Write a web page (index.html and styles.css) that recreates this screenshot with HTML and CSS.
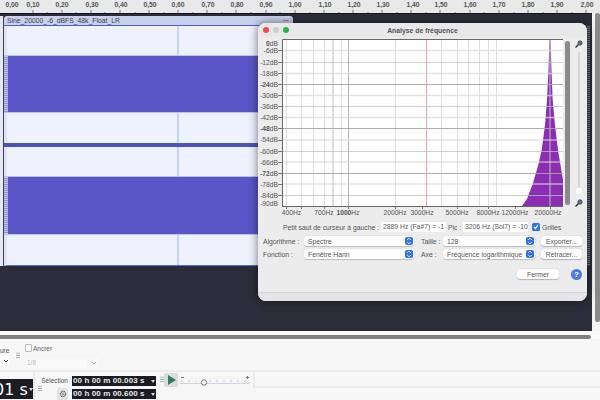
FILE: index.html
```html
<!DOCTYPE html>
<html lang="fr">
<head>
<meta charset="utf-8">
<title>Analyse de fréquence</title>
<link rel="stylesheet" href="styles.css">
</head>
<body>
<div class="app">
  <div class="ruler">
    <svg class="ruler-svg" width="600" height="13" viewBox="0 0 600 13">
      <path class="ruler-ticks" d="M33 10v3M62 10v3M91 10v3M120 10v3M149 10v3M178 10v3M207 10v3M236 10v3M266 10v3M295 10v3M324 10v3M353 10v3M382 10v3M411 10v3M440 10v3M470 10v3M499 10v3M528 10v3M557 10v3M586 10v3M47 12v1M76 12v1M105 12v1M135 12v1M164 12v1M193 12v1M222 12v1M251 12v1M280 12v1M310 12v1M339 12v1M368 12v1M397 12v1M426 12v1M455 12v1M484 12v1M514 12v1M543 12v1M572 12v1"/>
      <g class="ruler-labels">
        <text x="12" y="6.500">0,00</text><text x="33" y="6.500">0,10</text><text x="62" y="6.500">0,20</text><text x="92" y="6.500">0,30</text><text x="121" y="6.500">0,40</text><text x="150" y="6.500">0,50</text><text x="178" y="6.500">0,60</text><text x="208" y="6.500">0,70</text><text x="237" y="6.500">0,80</text><text x="266" y="6.500">0,90</text><text x="295" y="6.500">1,00</text><text x="325" y="6.500">1,10</text><text x="354" y="6.500">1,20</text><text x="383" y="6.500">1,30</text><text x="413" y="6.500">1,40</text><text x="441" y="6.500">1,50</text><text x="470" y="6.500">1,60</text><text x="499" y="6.500">1,70</text><text x="528" y="6.500">1,80</text><text x="557" y="6.500">1,90</text><text x="587" y="6.500">2,00</text>
      </g>
    </svg>
  </div>

  <div class="workspace">
    <div class="tracks">
      <div class="scale"></div>
      <div class="track">
        <div class="track-head"><span class="track-name">Sine_20000_-6_dBFS_48k_Float_LR</span><span class="track-menu">•••</span></div>
        <div class="channel">
          <div class="lane lane-a"></div>
          <div class="wave"></div>
          <div class="lane lane-b"></div>
        </div>
        <div class="channel-gap"></div>
        <div class="channel channel-low">
          <div class="lane lane-a"></div>
          <div class="wave"></div>
          <div class="lane lane-b"></div>
        </div>
      </div>
      <div class="edge-strip"></div>
    </div>
    <div class="vscroll"><div class="vscroll-thumb"></div></div>
  </div>

  <div class="hscroll"><div class="hscroll-thumb"></div></div>

  <div class="panel">
    <div class="panel-top">
      <div class="snap-left">
        <span class="small-label">ure</span>
        <span class="mini-select"><svg width="6" height="4" viewBox="0 0 6 4"><path class="chev-dark" d="M1 1l2 2 2-2"/></svg></span>
      </div>
      <div class="grip grip-top"></div>
      <div class="snap">
        <label class="anchor"><span class="anchor-box"></span>Ancrer</label>
        <div class="snap-row">
          <span class="snap-select">1/8</span>
          <span class="snap-btn"><svg width="6" height="4" viewBox="0 0 6 4"><path class="chev-light" d="M1 1l2 2 2-2"/></svg></span>
        </div>
      </div>
    </div>
    <div class="panel-bottom">
      <div class="time-wrap">
        <div class="time-big"><span class="time-text">01 s</span><span class="time-caret"></span></div>
      </div>
      <div class="grip grip-sel"></div>
      <div class="sel-labels">
        <span class="small-label">Sélection</span>
        <span class="gear-btn">
          <svg width="8" height="8" viewBox="0 0 8 8"><circle class="gear" cx="4" cy="4" r="2.600"/><circle class="gear-hole" cx="4" cy="4" r="1"/></svg>
        </span>
      </div>
      <div class="sel-times">
        <div class="time-box">00 h 00 m 00.003 s<span class="box-caret"></span></div>
        <div class="time-box">00 h 00 m 00.600 s<span class="box-caret"></span></div>
      </div>
      <div class="grip grip-play"></div>
      <span class="play-btn"><svg width="9" height="10" viewBox="0 0 9 10"><path class="play" d="M1 0l8 5-8 5z"/></svg></span>
      <svg class="speed" width="72" height="14" viewBox="0 0 72 14">
        <path class="speed-sign" d="M1 4.500h3M66 4.500h3M67.500 3v3"/>
        <path class="speed-track" d="M0 10.500h70"/>
        <path class="speed-ticks" d="M2 7v2M9 7v2M16 7v2M30 7v2M37 7v2M44 7v2M51 7v2M58 7v2M65 7v2"/>
        <circle class="speed-knob" cx="24" cy="9.500" r="2.700"/>
      </svg>
      <div class="panel-end"></div>
    </div>
  </div>

  <div class="dialog">
    <div class="titlebar">
      <span class="light light-red"></span><span class="light light-grey"></span><span class="light light-green"></span>
      <span class="title">Analyse de fréquence</span>
    </div>
    <svg class="graph" width="329" height="180" viewBox="258 37 329 180">
      <rect class="plot-bg" x="282" y="39" width="281" height="167"/>
      <path class="spectrum" d="M522 206L527 199L533 183L538 166L541.700 150L545 125L547 100L548.500 70L549.500 40L550.500 40L551.500 70L552.700 100L555 125L558 150L561 168L563 180L563 206Z"/>
      <path class="grid-soft" d="M286.500 39V206M301.500 39V206M313.500 39V206M324.500 39V206M341.500 39V206M395.500 39V206M441.500 39V206M457.500 39V206M468.500 39V206M479.500 39V206M488.500 39V206M496.500 39V206"/>
      <path class="grid-mid" d="M333 39V206M550 39V206"/>
      <path class="grid-hard" d="M348.500 39V206"/>
      <path class="grid-h-soft" d="M282 50.500H563M282 73.500H563M282 95.500H563M282 117.500H563M282 140H563M282 162H563M282 184H563"/>
      <path class="grid-h-mid" d="M282 62.500H563M282 106.500H563M282 151.500H563M282 195.500H563"/>
      <path class="grid-h-hard" d="M282 84.500H563M282 128.500H563M282 173.500H563"/>
      <path class="cursor" d="M426.500 39V206"/>
      <path class="plot-frame" d="M282.500 206V39.500H563M282 206.500H563"/>
      <path class="ticks" d="M278 50.500h4M278 62.500h4M278 73.500h4M278 84.500h4M278 95.500h4M278 106.500h4M278 117.500h4M278 128.500h4M278 140.500h4M278 151.500h4M278 162.500h4M278 173.500h4M278 184.500h4M278 195.500h4M286.500 206v3M301.500 206v3M324.500 206v3M348.500 206v3M395.500 206v3M422.500 206v3M457.500 206v3M488.500 206v3M515.500 206v3M550.500 206v3"/>
      <g class="db-labels">
        <text x="278" y="46"><tspan class="strong">0</tspan>dB</text>
        <text x="278" y="53">-6dB</text>
        <text x="278" y="64.500">-12dB</text>
        <text x="278" y="76">-18dB</text>
        <text x="278" y="86.500"><tspan class="strong">-24</tspan>dB</text>
        <text x="278" y="98">-30dB</text>
        <text x="278" y="109">-36dB</text>
        <text x="278" y="120">-42dB</text>
        <text x="278" y="131"><tspan class="strong">-48</tspan>dB</text>
        <text x="278" y="142">-54dB</text>
        <text x="278" y="153.500">-60dB</text>
        <text x="278" y="164.500">-66dB</text>
        <text x="278" y="175.500"><tspan class="strong">-72</tspan>dB</text>
        <text x="278" y="186.500">-78dB</text>
        <text x="278" y="197.500">-84dB</text>
        <text x="278" y="205.500">-90dB</text>
      </g>
      <g class="hz-labels">
        <text x="291.500" y="214.500">400Hz</text>
        <text x="324" y="214.500">700Hz</text>
        <text x="348" y="214.500"><tspan class="strong">1000</tspan>Hz</text>
        <text x="395" y="214.500">2000Hz</text>
        <text x="422" y="214.500">3000Hz</text>
        <text x="457" y="214.500">5000Hz</text>
        <text x="488" y="214.500">8000Hz</text>
        <text x="515" y="214.500">12000Hz</text>
        <text x="548" y="214.500">20000Hz</text>
      </g>
      <rect class="vbar" x="565" y="41" width="5" height="164" rx="2.500"/>
      <rect class="zoom-track" x="578" y="52" width="2" height="136" rx="1"/>
      <circle class="zoom-knob" cx="579" cy="191" r="4"/>
      <g class="magnifier"><circle cx="580" cy="43" r="2.200"/><path d="M578.300 44.800L575.500 47.500"/></g>
      <g class="magnifier"><circle cx="580" cy="202" r="2.200"/><path d="M578.300 203.800L575.500 206.500"/></g>
    </svg>

    <div class="controls">
      <div class="row row-cursor">
        <span class="cursor-label">Petit saut de curseur à gauche :</span>
        <span class="readout readout-a">2889 Hz (Fa#7) = -1</span>
        <span class="pic-label">Pic :</span>
        <span class="readout readout-b">3206 Hz (Sol7) = -10</span>
        <span class="check"><svg width="6" height="6" viewBox="0 0 6 6"><path class="check-mark" d="M1 3l1.500 1.500L5 1"/></svg></span>
        <span>Grilles</span>
      </div>
      <div class="row row-form">
        <span class="field-label">Algorithme :</span>
        <span class="select select-wide">Spectre<span class="stepper"><svg width="6" height="8" viewBox="0 0 6 8"><path class="step-mark" d="M1.200 3L3 1.200 4.800 3M1.200 5L3 6.800 4.800 5"/></svg></span></span>
        <span class="field-label-b">Taille :</span>
        <span class="select select-narrow">128<span class="stepper"><svg width="6" height="8" viewBox="0 0 6 8"><path class="step-mark" d="M1.200 3L3 1.200 4.800 3M1.200 5L3 6.800 4.800 5"/></svg></span></span>
        <span class="button button-side">Exporter...</span>
      </div>
      <div class="row row-form">
        <span class="field-label">Fonction :</span>
        <span class="select select-wide">Fenêtre Hann<span class="stepper"><svg width="6" height="8" viewBox="0 0 6 8"><path class="step-mark" d="M1.200 3L3 1.200 4.800 3M1.200 5L3 6.800 4.800 5"/></svg></span></span>
        <span class="field-label-b">Axe :</span>
        <span class="select select-narrow">Fréquence logarithmique<span class="stepper"><svg width="6" height="8" viewBox="0 0 6 8"><path class="step-mark" d="M1.200 3L3 1.200 4.800 3M1.200 5L3 6.800 4.800 5"/></svg></span></span>
        <span class="button button-side">Retracer...</span>
      </div>
      <div class="row row-close">
        <span class="button button-close">Fermer</span>
        <span class="help">?</span>
      </div>
    </div>
    <div class="dialog-foot"></div>
  </div>
</div>
</body>
</html>
```

FILE: styles.css
```css
* { box-sizing: border-box; }
html, body { margin: 0; padding: 0; }
body {
  width: 600px;
  height: 400px;
  overflow: hidden;
  background: #f6f6f6;
  font-family: "Liberation Sans", Arial, sans-serif;
  font-size: 6.800px;
  color: #4a4a4a;
}
.app { position: relative; width: 600px; height: 400px; overflow: hidden; }

/* Ruler */
.ruler { height: 13px; background: #e9e9e9; }
.ruler-svg { display: block; }
.ruler-ticks { stroke: #777; stroke-width: 1; fill: none; }
.ruler-labels text { font-size: 6.800px; font-weight: 700; fill: #555; text-anchor: middle; }

/* Workspace */
.workspace { display: flex; height: 318px; background: #f4f4f4; }
.tracks {
  display: flex;
  align-items: flex-start;
  width: 592px;
  background: #2b2d3a;
  padding: 2px 2px 0 0;
  border-top: 1px solid #15161d;
}
.scale {
  width: 4px;
  height: 250px;
  background: #e6e8f2;
  border-right: 1px solid #3a3e5a;
}
.track { width: 289px; }
.track-head {
  height: 10px;
  display: flex;
  justify-content: space-between;
  align-items: center;
  padding: 0 4px 0 3px;
  background: #c9d1ee;
  border-radius: 3px 3px 0 0;
  border-bottom: 1px solid #4f5fd0;
  color: #3c3c48;
}
.track-name { font-size: 6.750px; letter-spacing: 0.020px; white-space: nowrap; }
.track-menu { font-size: 4px; letter-spacing: 0.500px; color: #444; }
.channel { display: flex; flex-direction: column; }
.lane {
  height: 29px;
  background: linear-gradient(#c6d4f8, #c6d4f8) 170px 0 / 2px 100% no-repeat, #eef2fe;
  border-left: 3px solid #dfe3f2;
}
.lane-b { height: 30px; }
.wave {
  height: 58px;
  background: repeating-linear-gradient(#c6c9ea 0 1px, #8d8fd8 1px 2px) 0 0 / 4px 100% no-repeat, #5a56c8;
  border-top: 1px solid #b9c5ee;
  border-bottom: 1px solid #b9c5ee;
}
.channel-gap { height: 4px; background: #4a52c0; }
.channel-low .wave { height: 59px; }
.channel-low .lane-b { border-bottom: 1px solid #5b6ad6; height: 31px; }
.edge-strip {
  width: 3px;
  height: 240px;
  margin: 10px 0 0 auto;
  background: repeating-linear-gradient(#7a7d88 0 1px, #3a3c48 1px 2px);
}

.vscroll { width: 8px; padding: 0 0 0 3px; }
.vscroll-thumb { width: 5px; height: 309px; background: #8a8a8a; border-radius: 2px; }

.hscroll { height: 8px; background: #fbfbfb; padding: 4px 0 0; }
.hscroll-thumb { width: 591px; height: 4px; background: #808080; border-radius: 0 2px 2px 0; }

/* Bottom panel */
.panel { display: flex; flex-direction: column; height: 61px; background: #f6f6f6; }
.panel-top {
  display: flex;
  height: 34px;
  border-bottom: 2px solid #ececec;
}
.small-label { font-size: 6.500px; color: #555; }
.snap-left { display: flex; flex-direction: column; width: 16px; padding-top: 8px; gap: 2px; }
.mini-select {
  display: flex;
  align-items: center;
  justify-content: flex-end;
  width: 9px;
  height: 9px;
  background: #fff;
  border-radius: 0 2px 2px 0;
}
.chev-dark { stroke: #333; fill: none; stroke-width: 1; }
.chev-light { stroke: #aaa; fill: none; stroke-width: 1; }
.grip {
  width: 4px;
  height: 7px;
  background: radial-gradient(circle, #9a9a9a 0.700px, transparent 0.900px) 0 0 / 2px 2.300px;
}
.grip-top { margin: 13px 5px 0 0; }
.snap { display: flex; flex-direction: column; gap: 6px; padding-top: 5px; }
.anchor { display: flex; align-items: center; gap: 1px; font-size: 6.500px; color: #666; }
.anchor-box { width: 7px; height: 8px; background: #fff; border: 1px solid #bbb; border-radius: 1px; }
.snap-row { display: flex; gap: 2px; }
.snap-select {
  width: 62px;
  height: 10px;
  padding-left: 2px;
  line-height: 10px;
  background: #fafafa;
  border-radius: 2px;
  font-size: 6.500px;
  color: #bbb;
}
.snap-btn {
  display: flex;
  align-items: center;
  justify-content: center;
  width: 10px;
  height: 10px;
  background: #fafafa;
  border-radius: 2px;
}
.panel-bottom { display: flex; flex: 1; }
.time-wrap { width: 35px; padding-top: 7px; border-right: 2px solid #e8e8e8; }
.time-big {
  display: flex;
  align-items: center;
  width: 33px;
  height: 20px;
  background: #1b1c24;
  color: #fff;
  font-family: "DejaVu Sans", sans-serif;
  font-size: 16px;
  white-space: nowrap;
  overflow: hidden;
}
.time-text { margin-left: -6px; }
.time-caret {
  flex: none;
  width: 0;
  height: 0;
  margin-left: 1px;
  border: 2px solid transparent;
  border-top: 3px solid #ddd;
  border-bottom: 0;
}
.grip-sel { margin: 13px 2px 0 3px; }
.sel-labels {
  display: flex;
  flex-direction: column;
  align-items: flex-end;
  width: 24px;
  margin-right: 4px;
  padding-top: 5px;
  gap: 4px;
}
.gear-btn {
  display: flex;
  align-items: center;
  justify-content: center;
  width: 11px;
  height: 12px;
  background: #e2e2e2;
  border-radius: 2px;
}
.gear { fill: none; stroke: #555; stroke-width: 1.200; stroke-dasharray: 1 0.600; }
.gear-hole { fill: none; stroke: #666; stroke-width: 0.600; }
.sel-times { display: flex; flex-direction: column; gap: 3px; padding-top: 4px; margin-right: 4px; }
.time-box {
  position: relative;
  display: flex;
  width: 84px;
  height: 10px;
  padding-left: 1px;
  line-height: 10px;
  background: #1b1c24;
  color: #e8e8e8;
  font-size: 8px;
  font-weight: 700;
  letter-spacing: 0.100px;
  white-space: nowrap;
  overflow: hidden;
}
.box-caret {
  position: absolute;
  right: 1px;
  top: 4px;
  width: 0;
  height: 0;
  border: 2px solid transparent;
  border-top: 3px solid #ddd;
  border-bottom: 0;
}
.grip-play { margin: 4px 0 0 0; }
.play-btn {
  display: flex;
  align-items: center;
  justify-content: center;
  width: 14px;
  height: 14px;
  margin: 1px 2px 0 0;
  background: #dcdcdc;
  border-radius: 2px;
}
.play { fill: #2e7d60; }
.speed { margin: 1px 0 0 0; }
.speed-sign { stroke: #777; stroke-width: 1; fill: none; }
.speed-track { stroke: #c9d6ea; stroke-width: 1; fill: none; }
.speed-ticks { stroke: #ccc; stroke-width: 1; fill: none; }
.speed-knob { fill: #f6f6f6; stroke: #777; stroke-width: 1; }
.panel-end {
  flex: 1;
  height: 16px;
  margin-left: 1px;
  border-left: 2px solid #ececec;
  border-bottom: 2px solid #ececec;
}

/* Dialog */
.dialog {
  position: absolute;
  left: 258px;
  top: 23px;
  width: 329px;
  height: 278px;
  display: flex;
  flex-direction: column;
  background: #ececec;
  border-radius: 8px;
  box-shadow: 0 0 8px 1px rgba(0, 0, 0, .45);
  overflow: hidden;
}
.titlebar {
  position: relative;
  display: flex;
  align-items: center;
  gap: 4px;
  height: 14px;
  flex: none;
  padding-left: 5px;
  background: #e8e8e8;
}
.light { width: 6px; height: 6px; border-radius: 50%; }
.light-red { background: #f0484c; }
.light-grey { background: #cdcdcd; }
.light-green { background: #22b83a; }
.title {
  position: absolute;
  left: 0;
  right: 0;
  text-align: center;
  font-size: 6.850px;
  font-weight: 700;
  color: #555;
}
.graph { display: block; flex: none; }
.plot-bg { fill: #fff; }
.spectrum { fill: #8b2eb3; }
.grid-soft { stroke: rgba(205, 205, 205, .65); stroke-width: 1; fill: none; }
.grid-mid { stroke: rgba(190, 190, 190, .75); stroke-width: 1.400; fill: none; }
.grid-hard { stroke: #b5b5b5; stroke-width: 1; fill: none; }
.grid-h-soft { stroke: rgba(215, 215, 215, .7); stroke-width: 1.600; fill: none; }
.grid-h-mid { stroke: rgba(190, 190, 190, .75); stroke-width: 1; fill: none; }
.grid-h-hard { stroke: rgba(165, 165, 165, .9); stroke-width: 1; fill: none; }
.cursor { stroke: #f5a0a4; stroke-width: 1; fill: none; }
.plot-frame { stroke: #666; stroke-width: 1; fill: none; }
.ticks { stroke: #777; stroke-width: 1; fill: none; }
.db-labels text { font-size: 6.700px; fill: #555; text-anchor: end; }
.hz-labels text { font-size: 6.700px; fill: #555; text-anchor: middle; }
.strong { font-weight: 700; }
.vbar { fill: #8a8a8a; }
.zoom-track { fill: #d4d4d4; }
.zoom-knob { fill: #fafafa; stroke: #d0d0d0; stroke-width: 0.500; }
.magnifier circle { fill: #5f6f9a; stroke: #444; stroke-width: 0.800; }
.magnifier path { stroke: #222; stroke-width: 1.300; fill: none; }

.controls { display: flex; flex-direction: column; flex: 1; color: #555; white-space: nowrap; }
.row { display: flex; align-items: center; }
.row-cursor { height: 10px; margin-top: 5px; padding-left: 25px; }
.cursor-label { width: 98px; }
.readout {
  display: block;
  width: 65px;
  height: 10px;
  padding-left: 2px;
  line-height: 10px;
  background: #fff;
  overflow: hidden;
}
.pic-label { width: 17px; padding-left: 2px; }
.readout-b { margin-right: 4px; }
.check {
  display: flex;
  align-items: center;
  justify-content: center;
  width: 8px;
  height: 8px;
  margin-right: 2px;
  background: #2f72e4;
  border-radius: 1.500px;
}
.check-mark { stroke: #fff; stroke-width: 1.200; fill: none; }
.row-form { height: 10px; margin-top: 3px; padding-left: 5px; }
.row-cursor + .row-form { margin-top: 4px; }
.field-label { width: 41px; }
.field-label-b { width: 22px; margin-left: 7px; }
.select {
  display: flex;
  align-items: center;
  justify-content: space-between;
  height: 10px;
  padding: 0 1px 0 4px;
  background: #fff;
  border-radius: 3px;
  box-shadow: 0 0.500px 1px rgba(0, 0, 0, .2);
  overflow: hidden;
}
.select-wide { width: 110px; }
.select-narrow { width: 92px; }
.stepper {
  display: flex;
  align-items: center;
  justify-content: center;
  flex: none;
  width: 8px;
  height: 8px;
  background: #2f72e4;
  border-radius: 2px;
}
.step-mark { stroke: #fff; stroke-width: 0.900; fill: none; }
.button {
  display: flex;
  align-items: center;
  justify-content: center;
  height: 10px;
  background: #fff;
  border-radius: 3px;
  box-shadow: 0 0.500px 1px rgba(0, 0, 0, .25);
}
.button-side { width: 41px; margin-left: 6px; }
.row-close { height: 10px; margin-top: 10px; padding-left: 259px; }
.button-close { width: 42px; }
.help {
  display: flex;
  align-items: center;
  justify-content: center;
  width: 11px;
  height: 11px;
  margin-left: 12px;
  background: #4a7be0;
  border-radius: 50%;
  color: #fff;
  font-size: 8px;
  font-weight: 700;
}
.dialog-foot { height: 9px; flex: none; background: #e6e4e6; border-top: 1px solid #d8d8d8; }
```
